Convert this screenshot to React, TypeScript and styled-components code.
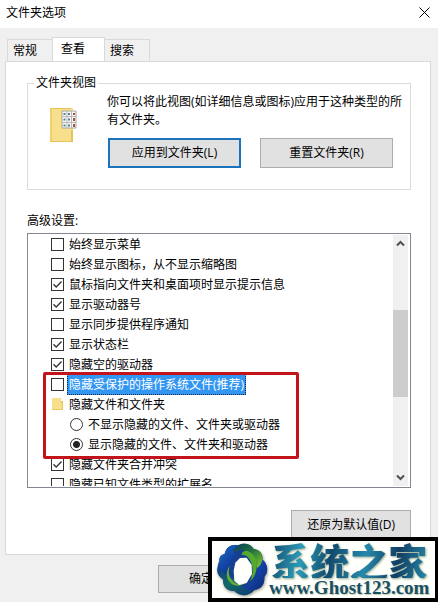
import React, { useState } from 'react';
import styled, { createGlobalStyle, css } from 'styled-components';

const GlobalStyle = createGlobalStyle`
  *, *::before, *::after { box-sizing: border-box; }
  html, body { margin: 0; height: 100%; overflow: hidden; }
  body, button, input {
    font-family: "Open Sans", "Noto Sans CJK SC", sans-serif;
    font-size: 12px;
    line-height: 18px;
    color: #000;
  }
`;

const Dialog = styled.main`
  position: relative;
  display: flex;
  flex-direction: column;
  min-height: 100vh;
  overflow: hidden;
  background: #f0f0f0;
`;

const TitleBar = styled.header`
  display: flex;
  align-items: center;
  justify-content: space-between;
  height: 28px;
  padding: 0 7px 0 6px;
  background: #fff;
`;

const Title = styled.h1`
  margin: 0;
  padding-bottom: 2px;
  font-size: 12px;
  font-weight: 400;
`;

const CloseButton = styled.button`
  display: flex;
  padding: 1px;
  margin-bottom: 4px;
  border: 0;
  background: none;
`;

const TabList = styled.div`
  display: flex;
  align-items: flex-end;
  height: 34px;
  margin: 0 7px -1px;
`;

const Tab = styled.button<{ $active?: boolean }>`
  height: 23px;
  padding: 0 15px 0 5px;
  border: 1px solid #d9d9d9;
  border-left-width: 0;
  background: #f0f0f0;
  text-align: left;
  &:first-child {
    border-width: 1px 0 1px 1px;
  }
  ${(p) =>
    p.$active &&
    css`
      height: 25px;
      padding: 0 19px 2px 8px;
      border-width: 1px 1px 0 1px;
      background: #fff;
    `}
`;

const Panel = styled.section`
  display: flex;
  flex-direction: column;
  margin: 0 7px 0 5px;
  padding: 12px 19px 14px 21px;
  border: 1px solid #d9d9d9;
  background: #fff;
`;

const Group = styled.fieldset`
  display: flex;
  gap: 30px;
  min-width: 0;
  margin: 0;
  padding: 1px 3px 21px 21px;
  border: 1px solid #dcdcdc;
`;

const Legend = styled.legend`
  margin-left: -15px;
  padding: 0 2px;
`;

const FolderArt = styled.svg`
  flex: none;
  margin-top: 14px;
`;

const GroupContent = styled.div`
  flex: 1;
  min-width: 0;
`;

const Description = styled.p`
  margin: 0;
`;

const ButtonPair = styled.div`
  display: grid;
  grid-template-columns: 1fr 1fr;
  gap: 19px;
  margin: 9px 14px 0 1px;
`;

const PushButton = styled.button<{ $default?: boolean }>`
  height: 30px;
  padding: 0 15px;
  border: ${(p) => (p.$default ? '2px solid #1a73bd' : '1px solid #adadad')};
  background: #e1e1e1;
`;

const ListLabel = styled.div`
  margin: 22px 0 3px;
`;

const ListBox = styled.div`
  display: flex;
  height: 255px;
  padding: 0 2px 1px 0;
  border: 1px solid #828790;
  background: #fff;
`;

const Rows = styled.div`
  flex: 1;
  overflow: hidden;
`;

const MarkedRows = styled.div`
  position: relative;
`;

const Highlight = styled.div`
  position: absolute;
  inset: -2px 94px -5px 15px;
  border: 3px solid #c4141b;
  border-radius: 2px;
  pointer-events: none;
`;

const Row = styled.label<{ $nested?: boolean }>`
  display: flex;
  align-items: center;
  gap: 3px;
  height: 20px;
  padding-left: ${(p) => (p.$nested ? '42px' : '23px')};
`;

const RowText = styled.span<{ $selected?: boolean }>`
  padding: 1px 1px 0;
  border: 1px solid transparent;
  white-space: nowrap;
  ${(p) =>
    p.$selected &&
    css`
      border: 1px dotted #10283f;
      background: #3396f3;
      color: #fff;
    `}
`;

const CheckInput = styled.input`
  appearance: none;
  flex: none;
  width: 13px;
  height: 13px;
  margin: 0;
  border: 1px solid #333;
  background: #fff center / 11px 11px no-repeat;
  &:checked {
    background-image: url("data:image/svg+xml,%3Csvg xmlns='http://www.w3.org/2000/svg' viewBox='0 0 11 11'%3E%3Cpath d='M1.5 5.3 4.2 8 9.5 2.5' fill='none' stroke='%23333' stroke-width='1.3'/%3E%3C/svg%3E");
  }
`;

const RadioInput = styled.input`
  appearance: none;
  flex: none;
  width: 13px;
  height: 13px;
  margin: 0;
  border: 1px solid #333;
  border-radius: 50%;
  background: #fff;
  &:checked { background: radial-gradient(circle, #222 0 3px, #fff 4px); }
`;

const SmallFolder = styled.svg`
  flex: none;
`;

const ScrollBar = styled.div`
  display: flex;
  flex-direction: column;
  width: 15px;
  margin-top: 1px;
  background: #f0f0f0;
`;

const ScrollArrow = styled.button`
  display: flex;
  align-items: center;
  justify-content: center;
  height: 17px;
  padding: 0;
  border: 0;
  background: none;
`;

const ScrollTrack = styled.div`
  flex: 1;
  padding-top: 58px;
`;

const ScrollThumb = styled.div`
  height: 87px;
  background: #cdcdcd;
`;

const RestoreRow = styled.div`
  display: flex;
  justify-content: flex-end;
  margin-top: 22px;
`;

const Footer = styled.footer`
  display: flex;
  padding: 10px 7px 9px 158px;
`;

const FooterButton = styled(PushButton)`
  width: 86px;
  height: 28px;
`;

const Watermark = styled.aside`
  position: absolute;
  right: 0;
  bottom: 0;
  display: flex;
  align-items: center;
  width: 230px;
  height: 65px;
  padding-left: 3px;
  border: 4px solid #000;
  border-right-width: 3px;
  background: #fffffb;
`;

const WatermarkText = styled.div`
  display: flex;
  flex-direction: column;
  align-items: center;
`;

const BrandName = styled.strong`
  font: 900 39px/36px "Noto Sans CJK SC", sans-serif;
  white-space: nowrap;
  color: transparent;
  background: linear-gradient(100deg, #164c70 0%, #2b9bb8 20%, #124a6e 38%, #2688ab 60%, #123e63 80%, #2688a8 100%);
  background-clip: text;
  filter: drop-shadow(1px 1px 1px #8fa58a);
`;

const BrandUrl = styled.span`
  font: 700 19px/20px "Liberation Serif", serif;
  color: #16506a;
  text-shadow: 1px 1px 1px #c3cbb0;
`;

const FolderPicture = () => (
  <FolderArt width="28" height="36" viewBox="0 0 28 36" aria-hidden="true">
    <path d="M1 1h23v34H1z" fill="#f7df8c" />
    <path d="M1 1h2v34H1z" fill="#efd06d" />
    <path d="M1 1h21v1H1zM22 23h2v12h-2zM1 34h23v1H1z" fill="#e3c35a" />
    <path d="M13 4h14v17H13z" fill="#f8f8f5" stroke="#a6a6a0" />
    <path d="M18 4v17M22.500 4v17M13 9.500h14M13 15.500h14" stroke="#b8b8b5" />
    <path d="M14.500 7h2M19 7h2M14.500 12.500h2M19 12.500h2M14.500 18.500h2M19 18.500h2" stroke="#567f9b" strokeWidth="2" />
    <path d="M24 6h2v2h-2zM24 11h2v3h-2zM24 17h2v3h-2z" fill="#a9504b" />
  </FolderArt>
);

const FolderGlyph = () => (
  <SmallFolder width="13" height="14" viewBox="0 0 13 14" aria-hidden="true">
    <path d="M1 1h9v3h2v9H1z" fill="#f7df8c" />
    <path d="M10 4h2v9h-1v-7h-1zM1 12h11v1H1z" fill="#e7c75f" />
  </SmallFolder>
);

const Chevron = ({ down = false }: { down?: boolean }) => (
  <svg width="9" height="7" viewBox="0 0 9 7" aria-hidden="true">
    <path d={down ? 'M1 1.500 4.500 5 8 1.500' : 'M1 5.500 4.500 2 8 5.500'} fill="none" stroke="#505050" strokeWidth="2" />
  </svg>
);

const Emblem = () => (
  <svg width="54" height="56" viewBox="40 20 162 168" aria-hidden="true">
    <defs>
      <linearGradient id="blue" x1="0" y1="0" x2="1" y2="1">
        <stop offset="0" stopColor="#1a74bd" />
        <stop offset=".5" stopColor="#1440a6" />
        <stop offset="1" stopColor="#0a2868" />
      </linearGradient>
      <linearGradient id="green" x1="0" y1="0" x2="1" y2="1">
        <stop offset="0" stopColor="#0b3f55" />
        <stop offset=".45" stopColor="#1f7040" />
        <stop offset="1" stopColor="#86cc2e" />
      </linearGradient>
      <linearGradient id="teal" x1="0" y1="0" x2="1" y2="1">
        <stop offset="0" stopColor="#0d3a86" />
        <stop offset=".45" stopColor="#146a66" />
        <stop offset="1" stopColor="#0c3878" />
      </linearGradient>
      <filter id="shade" x="-20%" y="-20%" width="140%" height="140%">
        <feDropShadow dx="2" dy="4" stdDeviation="4" floodColor="#777966" floodOpacity=".8" />
      </filter>
    </defs>
    <path
      d="M69 56c4-22 22-31 42-26 16-9 36-4 45 11 18 2 28 15 27 32 16 14 18 36 5 51 2 24-10 38-30 40-16 20-44 20-60 3-23 0-36-15-33-34-21-12-24-34-11-48-4-14 2-25 15-29Z"
      fill="#12418f"
      filter="url(#shade)"
    />
    <path d="M69 56c4-22 22-31 42-26 9 2 15 7 19 13-21-3-35 8-40 26-3 19-12 35-24 51-20-11-22-31-12-43-3-12 4-19 15-21Z" fill="url(#blue)" />
    <path d="M111 30c16-9 36-4 45 11 18 2 28 15 27 32-2 12-9 19-17 25 1-24-9-42-29-50-13-6-29-6-42 5 2-11 8-18 16-23Z" fill="url(#green)" />
    <path d="M183 73c16 14 18 36 5 51 2 24-10 38-30 40-10 4-25 3-36-4 22-5 37-20 41-40 3-13 12-27 20-47Z" fill="url(#blue)" />
    <path d="M54 85c-6 17-2 31 11 48-2 19 10 34 33 34 16 17 44 17 60-3-21 2-39-7-49-22-11-17-34-15-43-28-8-9-12-18-12-29Z" fill="url(#teal)" />
    <path d="M84 92c-5 18-3 31 7 43 9 12 22 15 37 10-20 12-40 5-50-14-5-14-2-29 6-39Z" fill="#65ad32" />
    <path d="M136 46c22 9 33 28 29 52-2 15-8 30-20 40 9-18 11-43 1-62-5-13-15-19-27-18 2-8 8-12 17-12Z" fill="#55a92d" />
    <path d="m115 68 20-1 15 22 1 27-16 27-22 6-15-12-2-31 5-24 14-14Z" fill="#fffffb" />
  </svg>
);

interface CheckRowProps {
  text: string;
  initial?: boolean;
  selected?: boolean;
}

const CheckRow = ({ text, initial = false, selected }: CheckRowProps) => (
  <Row>
    <CheckInput type="checkbox" defaultChecked={initial} />
    <RowText $selected={selected}>{text}</RowText>
  </Row>
);

export default function App() {
  const [showHidden, setShowHidden] = useState(true);
  return (
    <>
      <GlobalStyle />
      <Dialog>
        <TitleBar>
          <Title>文件夹选项</Title>
          <CloseButton aria-label="关闭">
            <svg width="11" height="11" viewBox="0 0 11 11" aria-hidden="true">
              <path d="m.5.5 10 10M10.500.5l-10 10" stroke="#000" />
            </svg>
          </CloseButton>
        </TitleBar>
        <TabList role="tablist">
          <Tab role="tab">常规</Tab>
          <Tab role="tab" aria-selected="true" $active>查看</Tab>
          <Tab role="tab">搜索</Tab>
        </TabList>
        <Panel>
          <Group>
            <Legend>文件夹视图</Legend>
            <FolderPicture />
            <GroupContent>
              <Description>你可以将此视图(如详细信息或图标)应用于这种类型的所有文件夹。</Description>
              <ButtonPair>
                <PushButton $default>应用到文件夹(L)</PushButton>
                <PushButton>重置文件夹(R)</PushButton>
              </ButtonPair>
            </GroupContent>
          </Group>
          <ListLabel id="advanced">高级设置:</ListLabel>
          <ListBox role="group" aria-labelledby="advanced">
            <Rows>
              <CheckRow text="始终显示菜单" />
              <CheckRow text="始终显示图标，从不显示缩略图" />
              <CheckRow text="鼠标指向文件夹和桌面项时显示提示信息" initial />
              <CheckRow text="显示驱动器号" initial />
              <CheckRow text="显示同步提供程序通知" />
              <CheckRow text="显示状态栏" initial />
              <CheckRow text="隐藏空的驱动器" initial />
              <MarkedRows>
                <CheckRow text="隐藏受保护的操作系统文件(推荐)" selected />
                <Row as="div">
                  <FolderGlyph />
                  <RowText>隐藏文件和文件夹</RowText>
                </Row>
                <Row $nested>
                  <RadioInput type="radio" name="hidden" checked={!showHidden} onChange={() => setShowHidden(false)} />
                  <RowText>不显示隐藏的文件、文件夹或驱动器</RowText>
                </Row>
                <Row $nested>
                  <RadioInput type="radio" name="hidden" checked={showHidden} onChange={() => setShowHidden(true)} />
                  <RowText>显示隐藏的文件、文件夹和驱动器</RowText>
                </Row>
                <Highlight />
              </MarkedRows>
              <CheckRow text="隐藏文件夹合并冲突" initial />
              <CheckRow text="隐藏已知文件类型的扩展名" />
            </Rows>
            <ScrollBar>
              <ScrollArrow aria-label="向上滚动"><Chevron /></ScrollArrow>
              <ScrollTrack><ScrollThumb /></ScrollTrack>
              <ScrollArrow aria-label="向下滚动"><Chevron down /></ScrollArrow>
            </ScrollBar>
          </ListBox>
          <RestoreRow>
            <PushButton>还原为默认值(D)</PushButton>
          </RestoreRow>
        </Panel>
        <Footer>
          <FooterButton>确定</FooterButton>
        </Footer>
        <Watermark>
          <Emblem />
          <WatermarkText>
            <BrandName>系统之家</BrandName>
            <BrandUrl>www.Ghost123.com</BrandUrl>
          </WatermarkText>
        </Watermark>
      </Dialog>
    </>
  );
}
